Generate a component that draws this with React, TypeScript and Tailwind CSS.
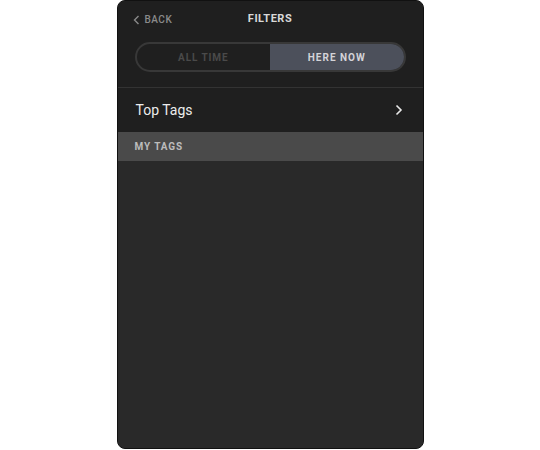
import React from 'react';

const font = { fontFamily: 'Roboto, "Noto Sans", "Liberation Sans", sans-serif' };

export default function App() {
    return (
        <div className="w-[540px] h-[450px] bg-white flex justify-center" style={font}>
            <div className="w-[307px] h-[449px] rounded-[8px] bg-[#292929] overflow-hidden flex flex-col border border-[#111]">
                {/* header */}
                <div className="bg-[#1f1f1f] h-[87px] flex flex-col border-b border-[#333]">
                    <div className="relative h-[36px] flex items-center justify-center">
                        <div className="absolute left-[15px] top-[11px] flex items-center gap-[5px] text-[#8a8a8a] text-[10px] font-medium tracking-[0.5px]">
                            <svg width="7" height="10" viewBox="0 0 7 10" fill="none">
                                <path d="M5.5 1L1.5 5L5.5 9" stroke="#8a8a8a" strokeWidth="1.4" />
                            </svg>
                            <span>BACK</span>
                        </div>
                        <span className="text-[#d8d8d8] text-[11px] font-bold tracking-[0.5px]">FILTERS</span>
                    </div>
                    <div className="mx-[17px] mt-[5px] h-[30px] rounded-full border-2 border-[#383838] flex overflow-hidden">
                        <div className="flex-1 flex items-center justify-center text-[#4a4a4a] text-[10px] font-bold tracking-[0.9px]">ALL TIME</div>
                        <div className="flex-1 bg-[#4c505b] flex items-center justify-center text-[#d4d4d8] text-[10px] font-bold tracking-[1px]">HERE NOW</div>
                    </div>
                </div>
                {/* top tags */}
                <div className="bg-[#1f1f1f] h-[44px] flex items-center justify-between pl-[18px] pr-[20px]">
                    <span className="text-[#ececec] text-[14px]">Top Tags</span>
                    <svg width="8" height="12" viewBox="0 0 8 12" fill="none">
                        <path d="M1.5 1.5L6 6L1.5 10.5" stroke="#e8e8e8" strokeWidth="1.6" />
                    </svg>
                </div>
                <div className="bg-[#4a4a4a] h-[29px] flex items-center pl-[17px]">
                    <span className="text-[#bcbcbc] text-[10px] font-bold tracking-[0.9px]">MY TAGS</span>
                </div>
                <div className="flex-1 bg-[#292929]" />
            </div>
        </div>
    );
}
